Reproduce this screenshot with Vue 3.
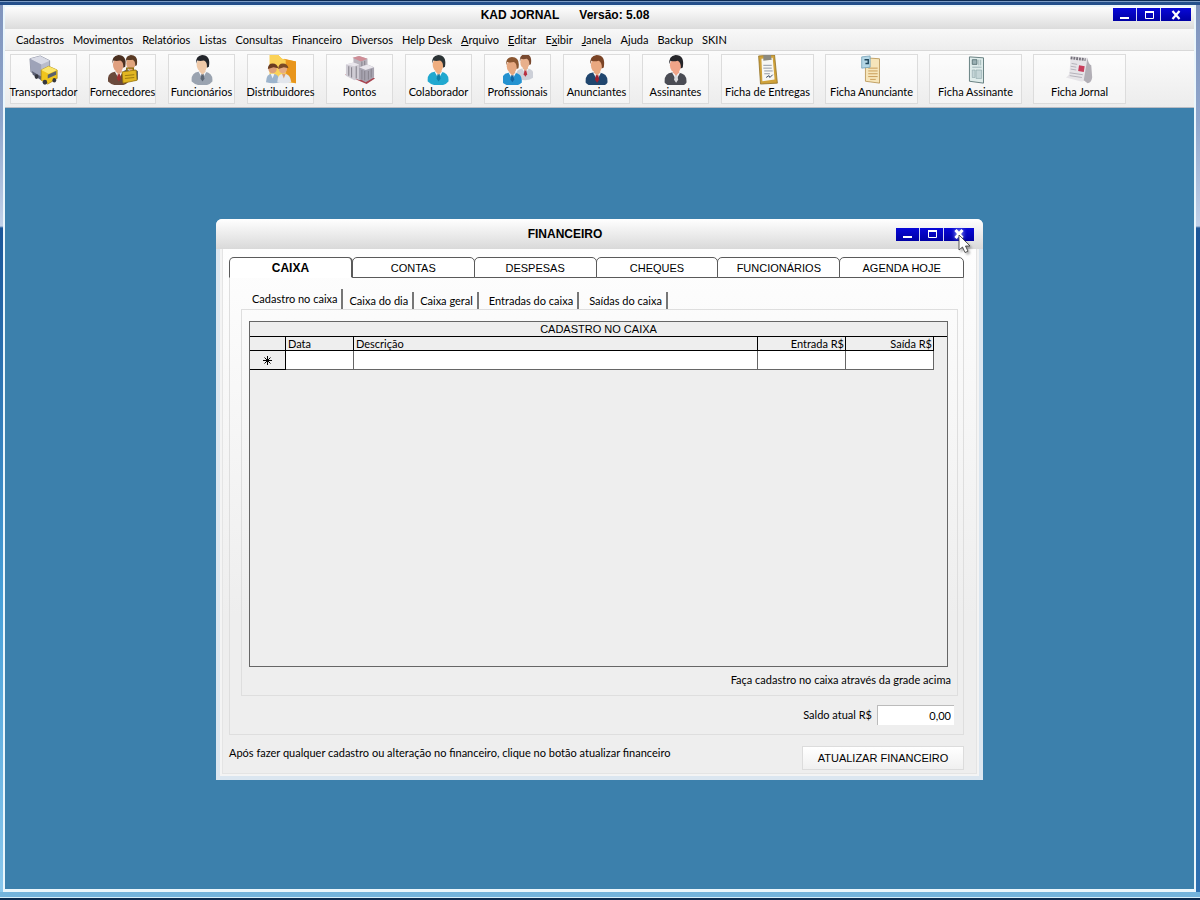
<script setup>
import { ref } from 'vue'

const menus = [
  ['', '', 'Cadastros'], ['', '', 'Movimentos'], ['', '', 'Relatórios'], ['', '', 'Listas'],
  ['', '', 'Consultas'], ['', '', 'Financeiro'], ['', '', 'Diversos'], ['', '', 'Help Desk'],
  ['', 'A', 'rquivo'], ['', 'E', 'ditar'], ['E', 'x', 'ibir'], ['', 'J', 'anela'],
  ['Aj', '', 'uda'], ['', '', 'Backup'], ['', '', 'SKIN']
]

const people = {
  fornecedores: [
    { x: 15, y: 0, s: 0.9, hair: '#5a3a24', skin: '#e0a47c', coat: '#5d6672', tie: '#c8ccd2' },
    { x: 0, y: 0, s: 1.05, hair: '#4a2f20', skin: '#e0a080', coat: '#6a4a3c', tie: '#a03030' }
  ],
  funcionarios: [{ x: 5, y: 0, s: 1.05, hair: '#23252b', skin: '#efc9a8', coat: '#9aa3b0', tie: '#5f6875' }],
  colaborador: [{ x: 4, y: 0, s: 1.05, hair: '#2c3436', skin: '#efae80', coat: '#20a8cf', tie: '#0f7fa8' }],
  profissionais: [
    { x: 14, y: -1, s: 0.9, hair: '#7a4a30', skin: '#e8b08c', coat: '#cdd0d8', tie: '#b83040' },
    { x: -1, y: 2, s: 1, hair: '#8a5630', skin: '#e6a880', coat: '#2492d0', tie: '#1467a4' }
  ],
  anunciantes: [{ x: 4, y: 0, s: 1.1, hair: '#7a4426', skin: '#e9a880', coat: '#20466e', tie: '#a02030' }],
  assinantes: [{ x: 4, y: 0, s: 1.1, hair: '#26262a', skin: '#f0a488', coat: '#4a4c54', tie: '#d8d8dc' }]
}

const smallTools = [
  { id: 'transportador', label: 'Transportador' },
  { id: 'fornecedores', label: 'Fornecedores' },
  { id: 'funcionarios', label: 'Funcionários' },
  { id: 'distribuidores', label: 'Distribuidores' },
  { id: 'pontos', label: 'Pontos' },
  { id: 'colaborador', label: 'Colaborador' },
  { id: 'profissionais', label: 'Profissionais' },
  { id: 'anunciantes', label: 'Anunciantes' },
  { id: 'assinantes', label: 'Assinantes' }
]
const wideTools = [
  { id: 'entregas', label: 'Ficha de Entregas' },
  { id: 'anunciante', label: 'Ficha Anunciante' },
  { id: 'assinante', label: 'Ficha Assinante' },
  { id: 'jornal', label: 'Ficha Jornal' }
]
const groups = [
  { name: 'small', tools: smallTools },
  { name: 'wide', tools: wideTools }
]

const tabs = ['CAIXA', 'CONTAS', 'DESPESAS', 'CHEQUES', 'FUNCIONÁRIOS', 'AGENDA HOJE']
const subTabs = ['Cadastro no caixa', 'Caixa do dia', 'Caixa geral', 'Entradas do caixa', 'Saídas do caixa']
const tab = ref('CAIXA')
const subTab = ref('Cadastro no caixa')
const balance = ref('0,00')
</script>

<template>
  <div class="frame">
    <div class="app">
      <header class="titlebar">
        <h1><span>KAD JORNAL</span><span>Versão: 5.08</span></h1>
        <div class="winbtns">
          <button aria-label="Minimizar"><svg viewBox="0 0 12 10"><path d="M1 8h9" stroke="#fff" stroke-width="2" /></svg></button>
          <button aria-label="Maximizar"><svg viewBox="0 0 12 10"><path d="M2.500 1.500h8v7h-8z" fill="none" stroke="#fff" /><path d="M2 2h9" stroke="#fff" stroke-width="2" /></svg></button>
          <button class="close" aria-label="Fechar"><svg viewBox="0 0 12 10"><path d="M2.500 1l7 8M9.500 1l-7 8" stroke="#fff" stroke-width="2.200" /></svg></button>
        </div>
      </header>

      <nav class="menubar">
        <button v-for="m in menus" :key="m.join('')">{{ m[0] }}<u v-if="m[1]">{{ m[1] }}</u>{{ m[2] }}</button>
      </nav>

      <div class="toolbar">
        <div v-for="g in groups" :key="g.name" class="group" :class="g.name">
          <button v-for="t in g.tools" :key="t.id">
            <svg class="icon" viewBox="0 0 32 32" aria-hidden="true">
              <g v-if="t.id === 'transportador'">
                <path d="M1 4l11-3 10 5v12l-8 6L2 18z" fill="#b9bccb" stroke="#7c8094" stroke-width=".8" />
                <path d="M1 4l11-3 10 5-9 4z" fill="#d9dbe6" />
                <path d="M1 4l12 6v13L2 17z" fill="#9ea3b8" />
                <path d="M3 17l10 6v4l-9-6z" fill="#5c6074" />
                <path d="M13 16l8-4 9 4v9l-10 6-7-4z" fill="#f0c51c" stroke="#a8840c" stroke-width=".8" />
                <path d="M13 16l8-4 9 4-9 4z" fill="#fbe56a" />
                <path d="M20 21l9-4v4l-9 4z" fill="#59616e" />
                <ellipse cx="8" cy="23" rx="2" ry="2.500" fill="#34363e" />
                <ellipse cx="17" cy="29" rx="2.400" ry="2.600" fill="#34363e" />
                <ellipse cx="27" cy="27" rx="2" ry="2.400" fill="#34363e" />
              </g>
              <g v-if="t.id === 'distribuidores'">
                <path d="M4 0h9l4 4 15 3v23l-28-3z" fill="#f5bb2e" />
                <path d="M19 4l13 3v23l-9-2z" fill="#e8951c" />
                <path d="M4 0h9l4 4 4 1v23l-17-3z" fill="#fbd257" />
                <circle cx="7" cy="15" r="4.500" fill="#dca078" /><path d="M2 15q0-6 5-6t6 5l-5-1z" fill="#6a3c20" />
                <circle cx="18" cy="15" r="4.500" fill="#e4ab84" /><path d="M13 15q0-6 5-6t6 5l-5-1z" fill="#7a4a26" />
                <path d="M0 29q0-9 7-9t8 9q-7 2-15 0z" fill="#9db4cc" />
                <path d="M5 20l2 5 2-5z" fill="#eef2f6" />
                <path d="M12 29q0-9 7-9t8 9q-7 2-15 0z" fill="#e3e6ec" />
                <path d="M17 20l2 5 2-5z" fill="#d99a70" />
              </g>
              <g v-if="t.id === 'pontos'">
                <path d="M0 21l15-5 17 9-9 6z" fill="#a84450" />
                <path d="M9 3l6-2 9 3v20l-9 3-6-3z" fill="#b9b4bd" />
                <path d="M8 3l7-2 9 3-7 3z" fill="#cf8d96" />
                <path d="M1 10l8-2 6 2v15l-5 2-9-5z" fill="#cfccd4" />
                <path d="M15 13l9-3 7 3v11l-9 5-7-4z" fill="#a7a4b0" />
                <path d="M4 12v10M7 13v11M12 12v13M18 7v6M21 6v5M18 16v10M21 17v10M25 17v9M28 15v9" stroke="#8b8791" stroke-width="1.200" />
                <path d="M1 10l8-2 6 2-5 2zM15 13l9-3 7 3-9 3z" fill="#e9e6ec" />
              </g>
              <g v-for="(p, i) in people[t.id] || []" :key="i" :transform="`translate(${p.x} ${p.y}) scale(${p.s})`">
                <path d="M0 27q-1-9 7-10h6q9 1 8 10-3 4-10 4T0 27z" :fill="p.coat" />
                <path d="M7 17l4 7 4-7z" fill="#f2f4f7" />
                <path d="M10 19h2l1 5-2 3-2-3z" :fill="p.tie" />
                <path d="M8 13h6v4l-3 3-3-3z" :fill="p.skin" />
                <ellipse cx="10.500" cy="10" rx="5.500" ry="7" :fill="p.skin" />
                <path d="M4.500 9q-1-8 6-9 9 0 7 12L15.500 13q.5-6-3-7.500-4 1-7 0z" :fill="p.hair" />
              </g>
              <g v-if="t.id === 'fornecedores'">
                <path d="M20 17v-3h7v3" fill="none" stroke="#8a6a08" stroke-width="1.500" />
                <path d="M15 18l15-2 1 11-15 3z" fill="#e2b722" stroke="#987408" stroke-width=".8" />
                <path d="M18 22l10-1M18 25l10-1" stroke="#9a780c" />
              </g>
              <g v-if="t.id === 'entregas'">
                <path d="M6 1l17-1 3 30-18 1z" fill="#d0a23a" stroke="#8d6c20" stroke-width=".8" />
                <path d="M9 4l12-1 2 23-13 2z" fill="#f7f7f4" />
                <path d="M11 0h8l1 5-9 1z" fill="#8b8a80" />
                <path d="M11 11h9M11 14h9M12 17h9M12 20h6" stroke="#8d94a0" />
                <path d="M14 24l3-2 1 2 3-3" fill="none" stroke="#30405c" />
              </g>
              <g v-if="t.id === 'anunciante'">
                <path d="M9 3l15 1v26l-15-2z" fill="#f6e5ba" stroke="#b08a44" stroke-width=".8" />
                <path d="M12 14h10M12 17h10M12 20h10M12 23h10M14 26h6" stroke="#c89a54" />
                <path d="M5 2l9-1v12l-9 1z" fill="#b5d7e6" stroke="#6c9cb4" stroke-width=".8" />
                <path d="M8 5h4v4h-3" fill="none" stroke="#20485e" stroke-width="1.500" />
              </g>
              <g v-if="t.id === 'assinante'">
                <path d="M9 2l15 1v27l-15-2z" fill="#dfeceb" stroke="#617b7c" />
                <path d="M12 5h5v5h-5z" fill="#9ab0b4" stroke="#4a6468" stroke-width=".8" />
                <path d="M19 5v6M21 5v6M12 13h10" stroke="#9db4b6" />
                <path d="M12 16h3v8h-3zM16 16h6v9h-6z" fill="#c4d5d7" stroke="#8aa3a6" stroke-width=".6" />
              </g>
              <g v-if="t.id === 'jornal'">
                <path d="M6 1l18 2-3 24q-2 2-5 1L1 24q4-2 4-8z" fill="#e6e4e8" />
                <path d="M24 3q1 7 4 8l1 13q-1 6-5 6l-4-3z" fill="#b2afb6" />
                <path d="M6 3l16 2" stroke="#77737c" stroke-width="3" stroke-dasharray="2 1" />
                <path d="M7 9l6 1M6 12l6 1M6 15l6 1M5 19l14 2M5 22l13 2" stroke="#b2afb8" />
                <path d="M15 11l6 1-1 6-6-1z" fill="#c83e5c" />
              </g>
            </svg>
            <span>{{ t.label }}</span>
          </button>
        </div>
      </div>

      <main class="desktop">
        <section class="dialog" aria-label="Financeiro">
          <header class="dlg-title">
            <h2>FINANCEIRO</h2>
            <div class="winbtns">
              <button aria-label="Minimizar"><svg viewBox="0 0 12 10"><path d="M1 8h9" stroke="#fff" stroke-width="2" /></svg></button>
              <button aria-label="Maximizar"><svg viewBox="0 0 12 10"><path d="M2.500 1.500h8v7h-8z" fill="none" stroke="#fff" /><path d="M2 2h9" stroke="#fff" stroke-width="2" /></svg></button>
              <button class="close" aria-label="Fechar">
                <svg class="hot" viewBox="0 0 12 10"><path d="M2.500 1l7 8M9.500 1l-7 8" stroke="#fff" stroke-width="3" /></svg>
                <svg class="pointer" viewBox="0 0 14 20"><path d="M1 1v15l3.500-3 2.500 5.500 3-1.300-2.500-5.200H12z" fill="#fff" stroke="#333" stroke-width=".8" /></svg>
              </button>
            </div>
          </header>

          <div class="dlg-body">
            <div class="tabs" role="tablist">
              <button v-for="t in tabs" :key="t" role="tab" :aria-selected="tab === t" :class="{ on: tab === t }" @click="tab = t">{{ t }}</button>
            </div>
            <div class="panel">
              <div class="subtabs" role="tablist">
                <button v-for="s in subTabs" :key="s" role="tab" :aria-selected="subTab === s" :class="{ on: subTab === s }" @click="subTab = s">{{ s }}</button>
              </div>
              <div class="inner">
                <div class="grid">
                  <table>
                    <caption>CADASTRO NO CAIXA</caption>
                    <colgroup>
                      <col class="c-mark"><col class="c-date"><col><col class="c-money"><col class="c-money"><col class="c-rest">
                    </colgroup>
                    <thead>
                      <tr><th></th><th>Data</th><th>Descrição</th><th class="num">Entrada R$</th><th class="num">Saída R$</th><td class="rest"></td></tr>
                    </thead>
                    <tbody>
                      <tr>
                        <th class="mark"><svg viewBox="0 0 9 9"><path d="M4.500 0v9M0 4.500h9M1.500 1.500l6 6M7.500 1.500l-6 6" stroke="#000" /></svg></th>
                        <td></td><td></td><td></td><td></td><td class="rest"></td>
                      </tr>
                    </tbody>
                  </table>
                </div>
                <p class="hint">Faça cadastro no caixa através da grade acima</p>
              </div>
              <div class="balance">
                <label for="saldo">Saldo atual R$</label>
                <input id="saldo" v-model="balance" type="text">
              </div>
            </div>
            <footer class="foot">
              <p>Após fazer qualquer cadastro ou alteração no financeiro, clique no botão atualizar financeiro</p>
              <button>ATUALIZAR FINANCEIRO</button>
            </footer>
          </div>
        </section>
      </main>
    </div>
  </div>
</template>

<style>
html, body { margin: 0; }
</style>

<style scoped>
* { box-sizing: border-box; }
h1, h2, p { margin: 0; }
button { margin: 0; padding: 0; border: 0; background: none; font: inherit; color: inherit; white-space: nowrap; }
.frame {
  min-height: 100vh;
  display: flex;
  padding: 5px 4px 8px 3px;
  background:
    linear-gradient(#0e2c54 0 1px, #7c9cc4 1px 2px, #24508c 2px 5px) top / 100% 5px no-repeat,
    linear-gradient(#74b4dc 0 5px, #d8f0fc 5px 6px, #0c2c50 6px) bottom / 100% 8px no-repeat,
    linear-gradient(#7f93bc, #8fa6cc 120px, #c0d0e8 226px, #1c5698 228px, #2a6cb0 600px, #2f70b0) right / 50% 100% no-repeat,
    linear-gradient(#7f93bc, #8fa6cc 120px, #c0d0e8 226px, #1c5698 228px, #48a0d8 600px, #8cc8ec) left / 50% 100% no-repeat;
  font-family: Lato, "Liberation Sans", Arial, sans-serif;
  font-size: 11px;
  line-height: 16px;
  color: #000;
}
.app {
  flex: 1;
  display: flex;
  flex-direction: column;
  border: solid #eaf6fc;
  border-width: 2px 2px 3px;
  background: #3c80ac;
}
.titlebar {
  display: flex;
  align-items: flex-start;
  height: 22px;
  padding-top: 1px;
  background: linear-gradient(#fdfdfd, #dcdcdc);
}
h1, h2 { flex: 1; display: flex; justify-content: center; font: bold 12px/14px "Liberation Sans", Arial, sans-serif; }
h1 { gap: 20px; padding-left: 12px; }
.winbtns { display: flex; gap: 1px; background: #d4d8f4; }
.titlebar .winbtns { margin-right: 3px; }
.winbtns button {
  width: 23px; height: 13px;
  display: flex; align-items: center; justify-content: center;
  background: linear-gradient(#0808d8, #0000a4);
}
.winbtns .close { width: 30px; position: relative; }
.winbtns svg { width: 12px; height: 10px; }
.winbtns .hot { filter: drop-shadow(0 0 2px #aab8ff); }
.winbtns .pointer { position: absolute; left: 14px; top: 6px; width: 14px; height: 20px; filter: drop-shadow(2px 2px 1px rgba(0, 0, 0, .3)); }
.menubar {
  display: flex;
  gap: 9px;
  height: 22px;
  align-items: center;
  padding: 0 11px;
  background: linear-gradient(#f8f8f8, #ededed);
  border-bottom: 1px solid #d8d8d8;
}
.toolbar {
  display: flex;
  gap: 12px;
  padding: 3px 5px;
  height: 57px;
  background: linear-gradient(#fbfbfb, #ececec);
  border-bottom: 1px solid #b8bcc4;
}
.group { display: flex; }
.small { gap: 12px; }
.wide { gap: 11px; }
.group button {
  width: 67px; height: 50px;
  display: flex; flex-direction: column; align-items: center;
  border: 1px solid #dcdcdc;
  background: rgba(255, 255, 255, .4);
}
.wide button { width: 93px; }
.icon { width: 30px; height: 30px; flex: none; }
.group span { line-height: 14px; }
.desktop { flex: 1; display: grid; justify-items: center; align-items: center; padding: 18px 16px 16px; }
.dialog {
  width: 100%;
  max-width: 767px;
  border-radius: 6px 6px 0 0;
  border: solid #dbe6f0;
  border-width: 0 4px 4px;
  background: #f4f4f4;
}
.dlg-title {
  display: flex; align-items: center;
  height: 30px;
  margin: 0 -4px;
  padding-right: 9px;
  border-radius: 6px 6px 0 0;
  background: linear-gradient(#ffffff, #d9d9d9);
}
h2 { padding-left: 18px; }
.dlg-body {
  margin: 0 2px 2px;
  padding: 8px 12px 2px 6px;
  border: solid #e4e4e4;
  border-width: 0 1px 1px;
  background: linear-gradient(#fefefe, #eeeeee 70%);
}
.tabs { display: flex; }
.tabs button, caption, .foot button { font-family: "Liberation Sans", Arial, sans-serif; }
.tabs button {
  flex: 122 1 0;
  height: 21px;
  margin-right: -1px;
  background: #fff;
  border: 1px solid #5a5a5a;
  border-radius: 5px 5px 0 0;
}
.tabs button:last-child { flex-grow: 124; margin-right: 0; }
.tabs .on { border-bottom-color: #fff; border-right-width: 2px; font-size: 12px; font-weight: bold; }
.panel { border: 1px solid #dedede; border-top: 0; padding: 11px 5px 9px 11px; }
.subtabs { display: flex; align-items: flex-end; height: 20px; padding-left: 5px; }
.subtabs button { height: 17px; padding: 0 4px 0 6px; border-right: 2px solid #777; }
.subtabs button:nth-child(n+4) { padding-left: 10px; }
.subtabs .on { height: 20px; }
.inner { border: 1px solid #dedede; padding: 11px 9px 7px 7px; }
.grid { height: 346px; border: 1px solid #666; background: #eeeeee; }
table { width: 100%; table-layout: fixed; border-collapse: separate; border-spacing: 0; }
caption { height: 15px; line-height: 15px; border-bottom: 1px solid #000; }
.c-mark { width: 36px; }
.c-date { width: 68px; }
.c-money { width: 88px; }
.c-rest { width: 13px; }
th { font-weight: normal; text-align: left; padding: 0 2px; height: 14px; line-height: 13px; border-right: 1px solid #000; border-bottom: 1px solid #000; background: #eee; }
th.num { text-align: right; padding: 0 1px; }
td { height: 19px; padding: 0; background: #fff; border-right: 1px solid #666; border-bottom: 1px solid #666; }
thead td { height: 14px; }
td.rest { border: 0; background: none; }
.mark { text-align: center; }
.mark svg { width: 9px; height: 9px; display: block; margin: 0 auto; }
.hint { margin-top: 5px; text-align: right; margin-right: -3px; }
.balance { display: flex; justify-content: flex-end; align-items: center; gap: 5px; margin-top: 9px; padding-right: 4px; }
.balance input {
  width: 77px; height: 20px; padding: 0 3px;
  border: solid #bbb; border-width: 1px 0 0 1px;
  background: #fff; font: inherit; text-align: right;
}
.foot { display: flex; justify-content: space-between; align-items: center; margin-top: 10px; }
.foot p { margin-bottom: 10px; }
.foot button { width: 162px; height: 24px; border: 1px solid #dcdcdc; background: linear-gradient(#fff, #f0f0f0); }
</style>
